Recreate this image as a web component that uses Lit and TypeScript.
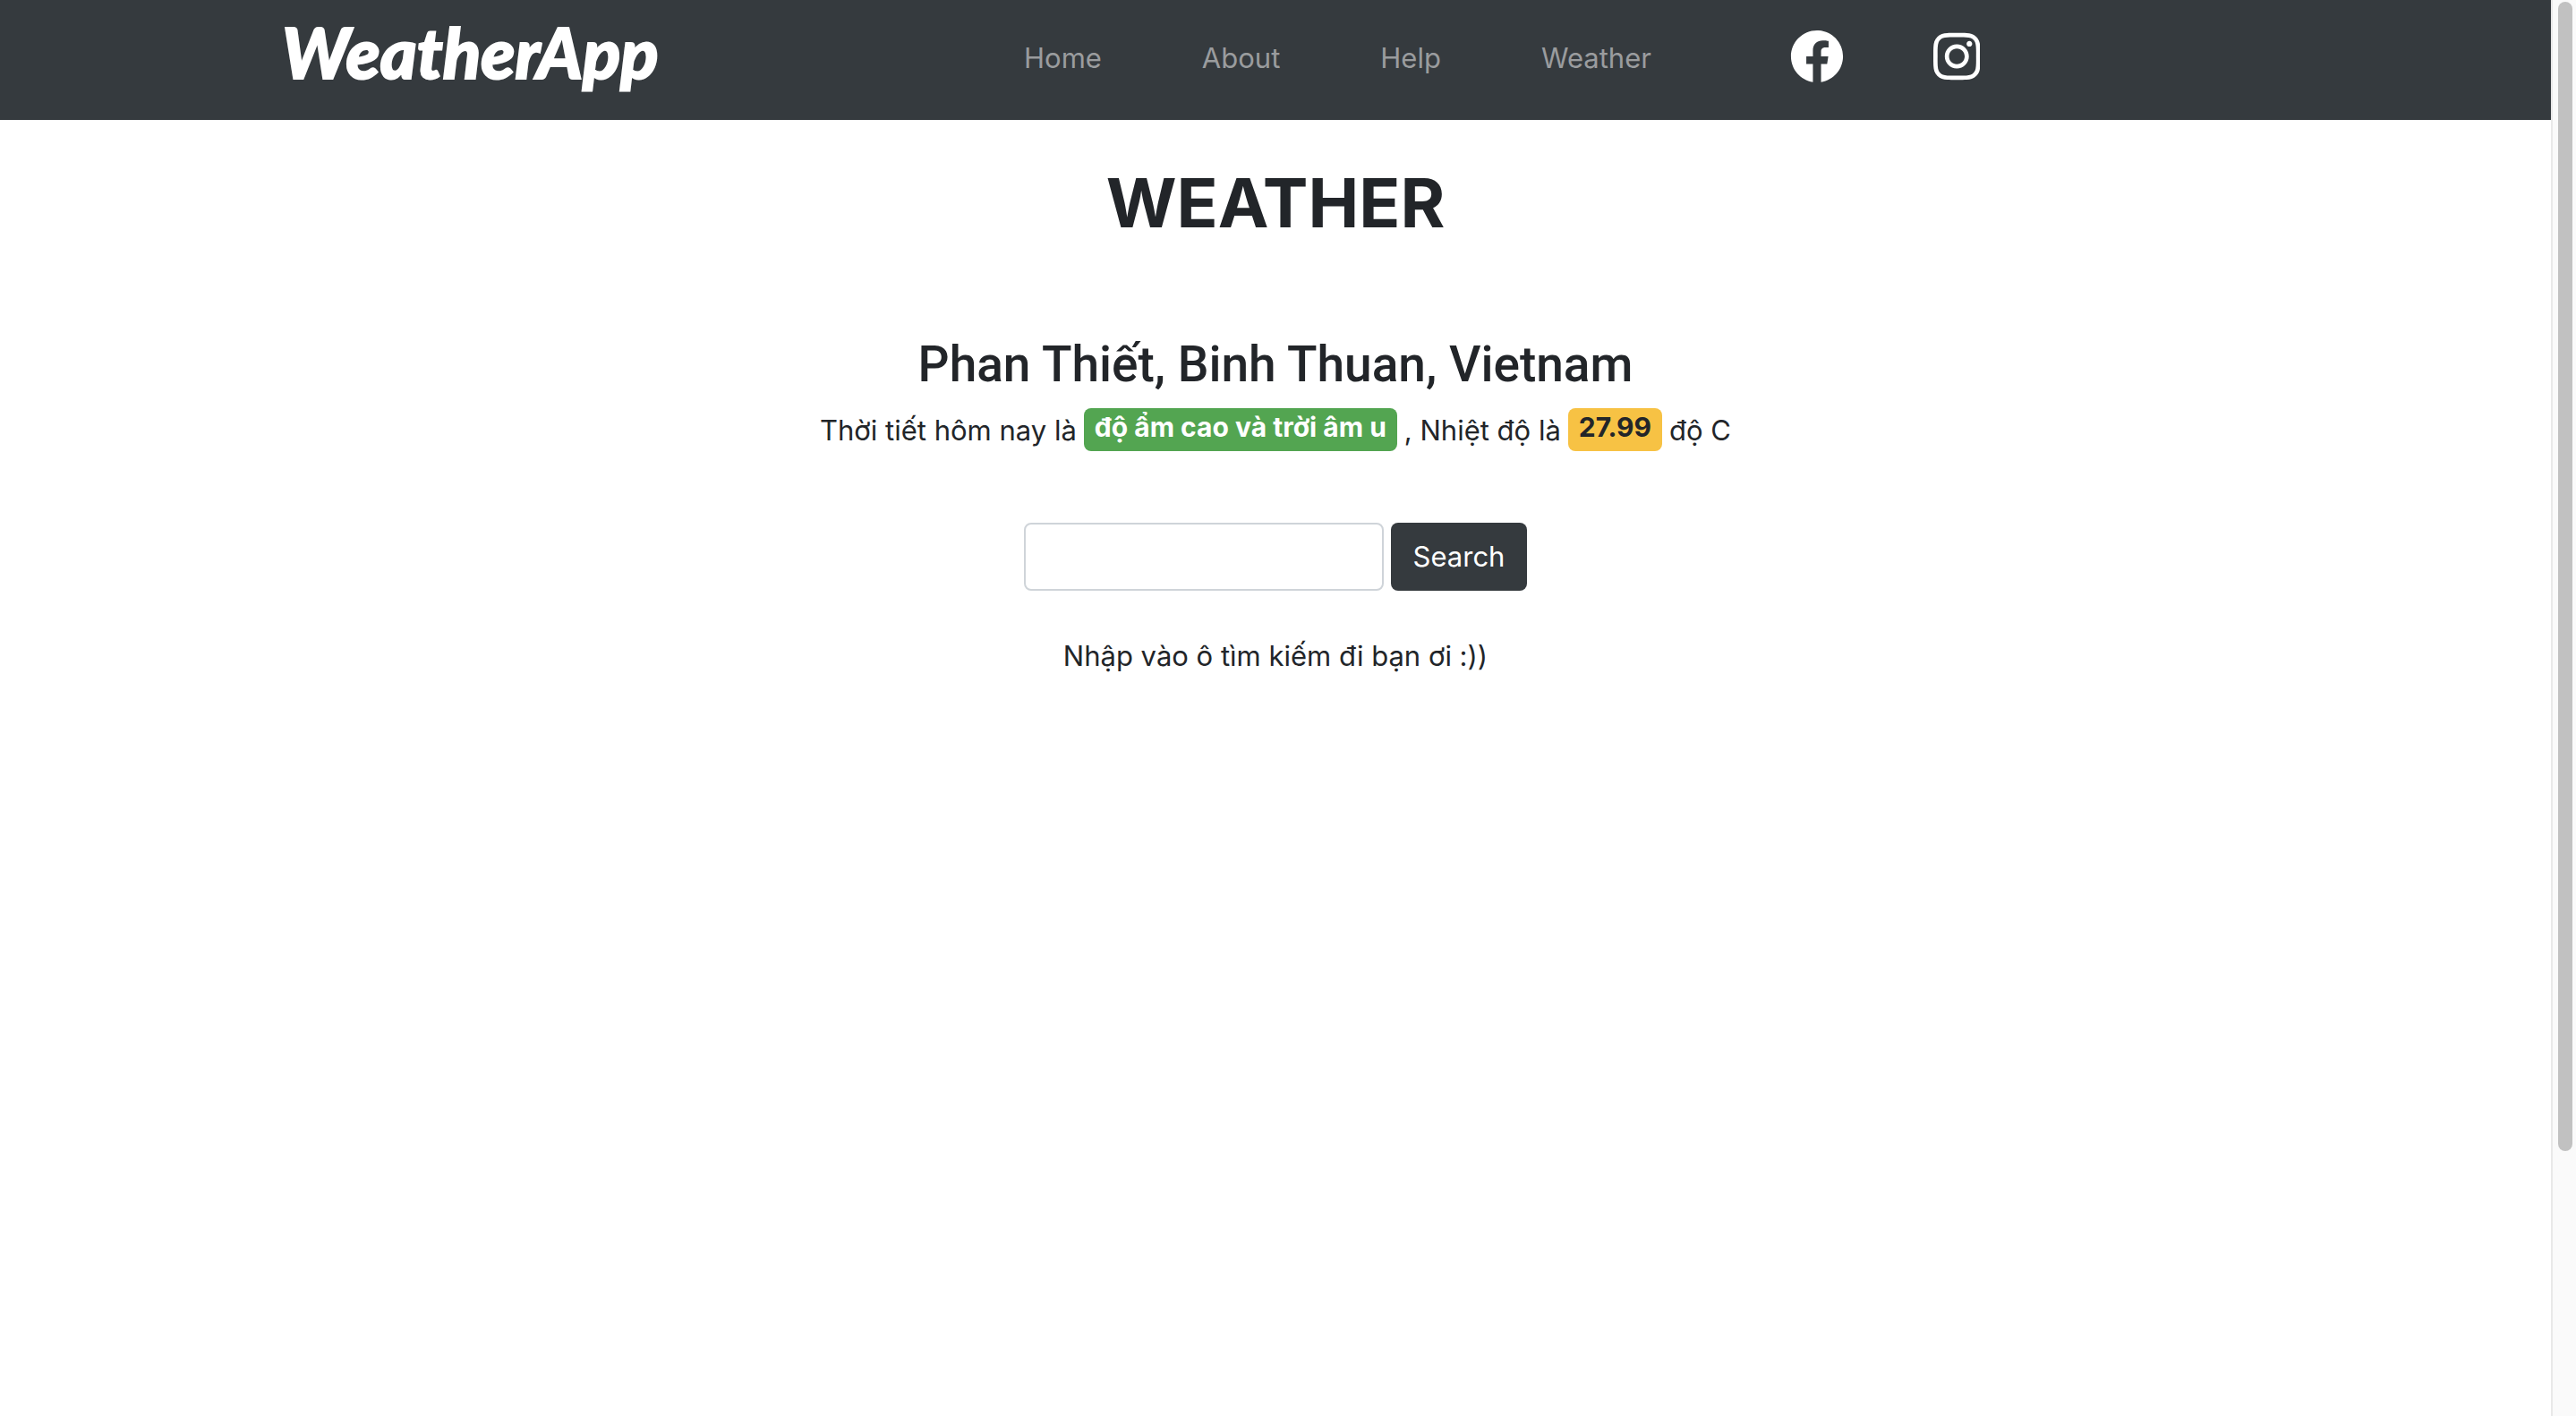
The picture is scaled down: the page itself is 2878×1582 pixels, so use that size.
import { LitElement, html, css } from "lit";
import { customElement, state } from "lit/decorators.js";

const NAV_ITEMS = ["Home", "About", "Help", "Weather"];

@customElement("site-header")
export class SiteHeader extends LitElement {
  static styles = css`
    :host {
      display: block;
      background: #353a3e;
    }
    .bar {
      box-sizing: border-box;
      max-width: 2280px;
      margin: 0 auto;
      padding: 33px 30px 41px;
      display: grid;
      grid-template-columns: 829fr 1391fr;
      align-items: start;
    }
    a {
      color: inherit;
      text-decoration: none;
    }
    .brand {
      justify-self: start;
      font: italic 900 78px/50px Lato, "Open Sans", sans-serif;
      color: #fff;
      -webkit-text-stroke: 2px #fff;
      paint-order: stroke;
    }
    .menu {
      display: flex;
      gap: 155px;
    }
    .links {
      display: flex;
      gap: 112px;
      padding-top: 8px;
      color: #9a9c9e;
    }
    .social {
      display: flex;
      gap: 100px;
      color: #fff;
    }
    .social a {
      display: block;
      height: 60px;
    }
    svg {
      display: block;
      height: 60px;
      fill: currentColor;
    }
  `;

  render() {
    return html`
      <header class="bar">
        <a class="brand" href="#">WeatherApp</a>
        <div class="menu">
          <nav class="links">
            ${NAV_ITEMS.map((item) => html`<a href="#${item.toLowerCase()}">${item}</a>`)}
          </nav>
          <div class="social">
            <a href="#facebook" aria-label="Facebook">
              <svg viewBox="0 0 512 512" aria-hidden="true">
                <path d="M504 256C504 119 393 8 256 8S8 119 8 256c0 123.78 90.69 226.38 209.25 245V327.69h-63V256h63v-54.64c0-62.15 37-96.48 93.67-96.48 27.14 0 55.52 4.84 55.52 4.84v61h-31.28c-30.8 0-40.41 19.12-40.41 38.73V256h68.78l-11 71.69h-57.78V501C413.31 482.38 504 379.78 504 256z" />
              </svg>
            </a>
            <a href="#instagram" aria-label="Instagram">
              <svg viewBox="0 0 448 512" aria-hidden="true">
                <path d="M224.1 141c-63.6 0-114.9 51.3-114.9 114.9s51.3 114.9 114.9 114.9S339 319.5 339 255.9 287.7 141 224.1 141zm0 189.6c-41.1 0-74.7-33.5-74.7-74.7s33.5-74.7 74.7-74.7 74.7 33.5 74.7 74.7-33.6 74.7-74.7 74.7zm146.4-194.3c0 14.9-12 26.8-26.8 26.8-14.9 0-26.8-12-26.8-26.8s12-26.8 26.8-26.8 26.8 12 26.8 26.8zm76.1 27.2c-1.7-35.9-9.9-67.7-36.2-93.9-26.2-26.2-58-34.4-93.9-36.2-37-2.1-147.9-2.1-184.9 0-35.8 1.7-67.6 9.9-93.9 36.1s-34.4 58-36.2 93.9c-2.1 37-2.1 147.9 0 184.9 1.7 35.9 9.9 67.7 36.2 93.9s58 34.4 93.9 36.2c37 2.1 147.9 2.1 184.9 0 35.9-1.7 67.7-9.9 93.9-36.2 26.2-26.2 34.4-58 36.2-93.9 2.1-37 2.1-147.8 0-184.8zM398.8 388c-7.8 19.6-22.9 34.7-42.6 42.6-29.5 11.7-99.5 9-132.1 9s-102.7 2.6-132.1-9c-19.6-7.8-34.7-22.9-42.6-42.6-11.7-29.5-9-99.5-9-132.1s-2.6-102.7 9-132.1c7.8-19.6 22.9-34.7 42.6-42.6 29.5-11.7 99.5-9 132.1-9s102.7-2.6 132.1 9c19.6 7.8 34.7 22.9 42.6 42.6 11.7 29.5 9 99.5 9 132.1s2.7 102.7-9 132.1z" />
              </svg>
            </a>
          </div>
        </div>
      </header>
    `;
  }
}

@customElement("weather-panel")
export class WeatherPanel extends LitElement {
  static styles = css`
    :host {
      display: block;
      padding: 44px 30px;
    }
    main {
      display: flex;
      flex-direction: column;
      align-items: center;
    }
    h1,
    h2,
    p {
      margin: 0;
    }
    h1 {
      font-size: 76px;
      line-height: 96px;
      font-weight: 700;
    }
    h2 {
      margin-top: 100px;
      font-family: Roboto, Inter, sans-serif;
      font-size: 55px;
      line-height: 66px;
      font-weight: 500;
    }
    .summary {
      display: flex;
      flex-wrap: wrap;
      align-items: flex-start;
      gap: 8px;
      margin-top: 16px;
      line-height: 50px;
    }
    .badge {
      padding: 6px 12px 12px;
      border-radius: 8px;
      font-size: 30px;
      line-height: 30px;
      font-weight: 700;
    }
    .success {
      background: #53a551;
      color: #fff;
    }
    .warning {
      background: #f7c244;
    }
    form {
      display: flex;
      gap: 8px;
      margin-top: 78px;
    }
    input,
    button {
      box-sizing: border-box;
      height: 76px;
      border-radius: 8px;
      font: inherit;
      color: inherit;
    }
    input {
      width: 402px;
      padding: 12px 24px;
      border: 2px solid #cfd4d9;
      background: #fff;
    }
    button {
      padding: 14px 25px;
      border: 0;
      background: #353a3e;
      color: #fff;
    }
    .hint {
      margin-top: 49px;
    }
  `;

  @state() private query = "";

  private onInput(e: Event) {
    this.query = (e.target as HTMLInputElement).value;
  }

  render() {
    return html`
      <main>
        <h1>WEATHER</h1>
        <h2>Phan Thiết, Binh Thuan, Vietnam</h2>
        <p class="summary">
          <span>Thời tiết hôm nay là</span>
          <span class="badge success">độ ẩm cao và trời âm u</span>
          <span>, Nhiệt độ là</span>
          <span class="badge warning">27.99</span>
          <span>độ C</span>
        </p>
        <form @submit=${(e: Event) => e.preventDefault()}>
          <input type="text" aria-label="Search" .value=${this.query} @input=${this.onInput} />
          <button type="submit">Search</button>
        </form>
        <p class="hint">Nhập vào ô tìm kiếm đi bạn ơi :))</p>
      </main>
    `;
  }
}

@customElement("app-root")
export class AppRoot extends LitElement {
  static styles = css`
    :host {
      display: flex;
      min-height: 100vh;
      background: #fff;
      color: #222529;
      font: 400 31px/48px Inter, "Noto Sans", sans-serif;
    }
    .page {
      flex: 1;
      min-width: 0;
    }
    .track {
      box-sizing: border-box;
      width: 28px;
      padding: 2px 4px 2px 6px;
      border-left: 2px solid #e8e8e8;
      background: #fafafa;
      display: grid;
      grid-template-rows: 1284fr 294fr;
    }
    .thumb {
      border-radius: 8px;
      background: #c1c1c1;
    }
  `;

  render() {
    return html`
      <div class="page">
        <site-header></site-header>
        <weather-panel></weather-panel>
      </div>
      <div class="track" aria-hidden="true"><div class="thumb"></div></div>
    `;
  }
}
